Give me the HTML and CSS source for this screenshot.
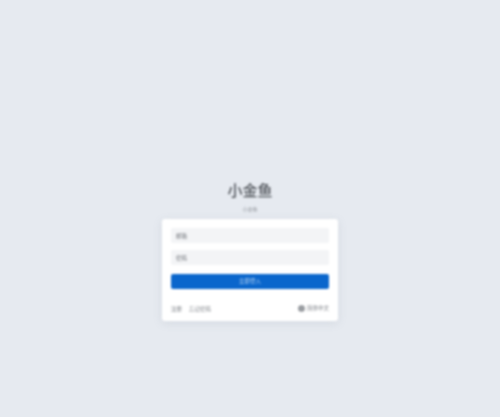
FILE: index.html
```html
<!DOCTYPE html>
<html lang="zh">
<head>
<meta charset="utf-8">
<title>小金鱼</title>
<link rel="stylesheet" href="styles.css">
</head>
<body>
<main class="page">
  <h1 class="title">小金鱼</h1>
  <p class="subtitle">小金鱼</p>
  <form class="card">
    <div class="field">邮箱</div>
    <div class="field">密码</div>
    <div class="submit">立即登入</div>
    <div class="links">
      <span class="link-group"><span>注册</span><span>忘记密码</span></span>
      <span class="lang">
        <svg class="globe" viewBox="0 0 16 16" aria-hidden="true"><circle cx="8" cy="8" r="7.5" fill="#7d8187"/><path d="M1 8h14M8 1c-4 4-4 10 0 14M8 1c4 4 4 10 0 14" stroke="#d5d7db" fill="none"/></svg>
        简体中文
      </span>
    </div>
  </form>
</main>
</body>
</html>
```
FILE: styles.css
```css
html, body { margin: 0; height: 100%; }
body {
  background: #e6eaf0;
  font-family: "Noto Sans CJK SC", "Liberation Sans", sans-serif;
  overflow: hidden;
}
.page {
  display: flex;
  flex-direction: column;
  align-items: center;
  padding-top: 179px;
  filter: blur(0.8px);
}
.title {
  margin: 0;
  font-size: 15px;
  line-height: 22px;
  font-weight: 500;
  color: #4f5359;
}
.subtitle {
  margin: 4px 0 0;
  font-size: 5px;
  line-height: 8px;
  color: #8b8f95;
}
.card {
  box-sizing: border-box;
  width: 176px;
  height: 102px;
  margin-top: 6px;
  padding: 9px;
  background: #fff;
  border-radius: 3px;
  box-shadow: 0 2px 10px rgba(120, 130, 150, .16);
  display: flex;
  flex-direction: column;
}
.field {
  height: 15px;
  margin-bottom: 7px;
  padding-left: 5px;
  background: #f3f4f6;
  border-radius: 2px;
  font-size: 5.5px;
  line-height: 16px;
  color: #6f7379;
}
.submit {
  height: 15px;
  margin-top: 2px;
  background: #0a66cc;
  border-radius: 2px;
  font-size: 5.5px;
  line-height: 15px;
  text-align: center;
  color: #b9d4f2;
}
.links {
  display: flex;
  justify-content: space-between;
  align-items: center;
  margin-top: 13px;
  font-size: 5.5px;
  line-height: 10px;
  color: #84888e;
}
.link-group { display: flex; gap: 7px; padding-top: 2px; }
.lang { display: flex; align-items: center; gap: 2px; }
.globe { width: 7px; height: 7px; }
```
